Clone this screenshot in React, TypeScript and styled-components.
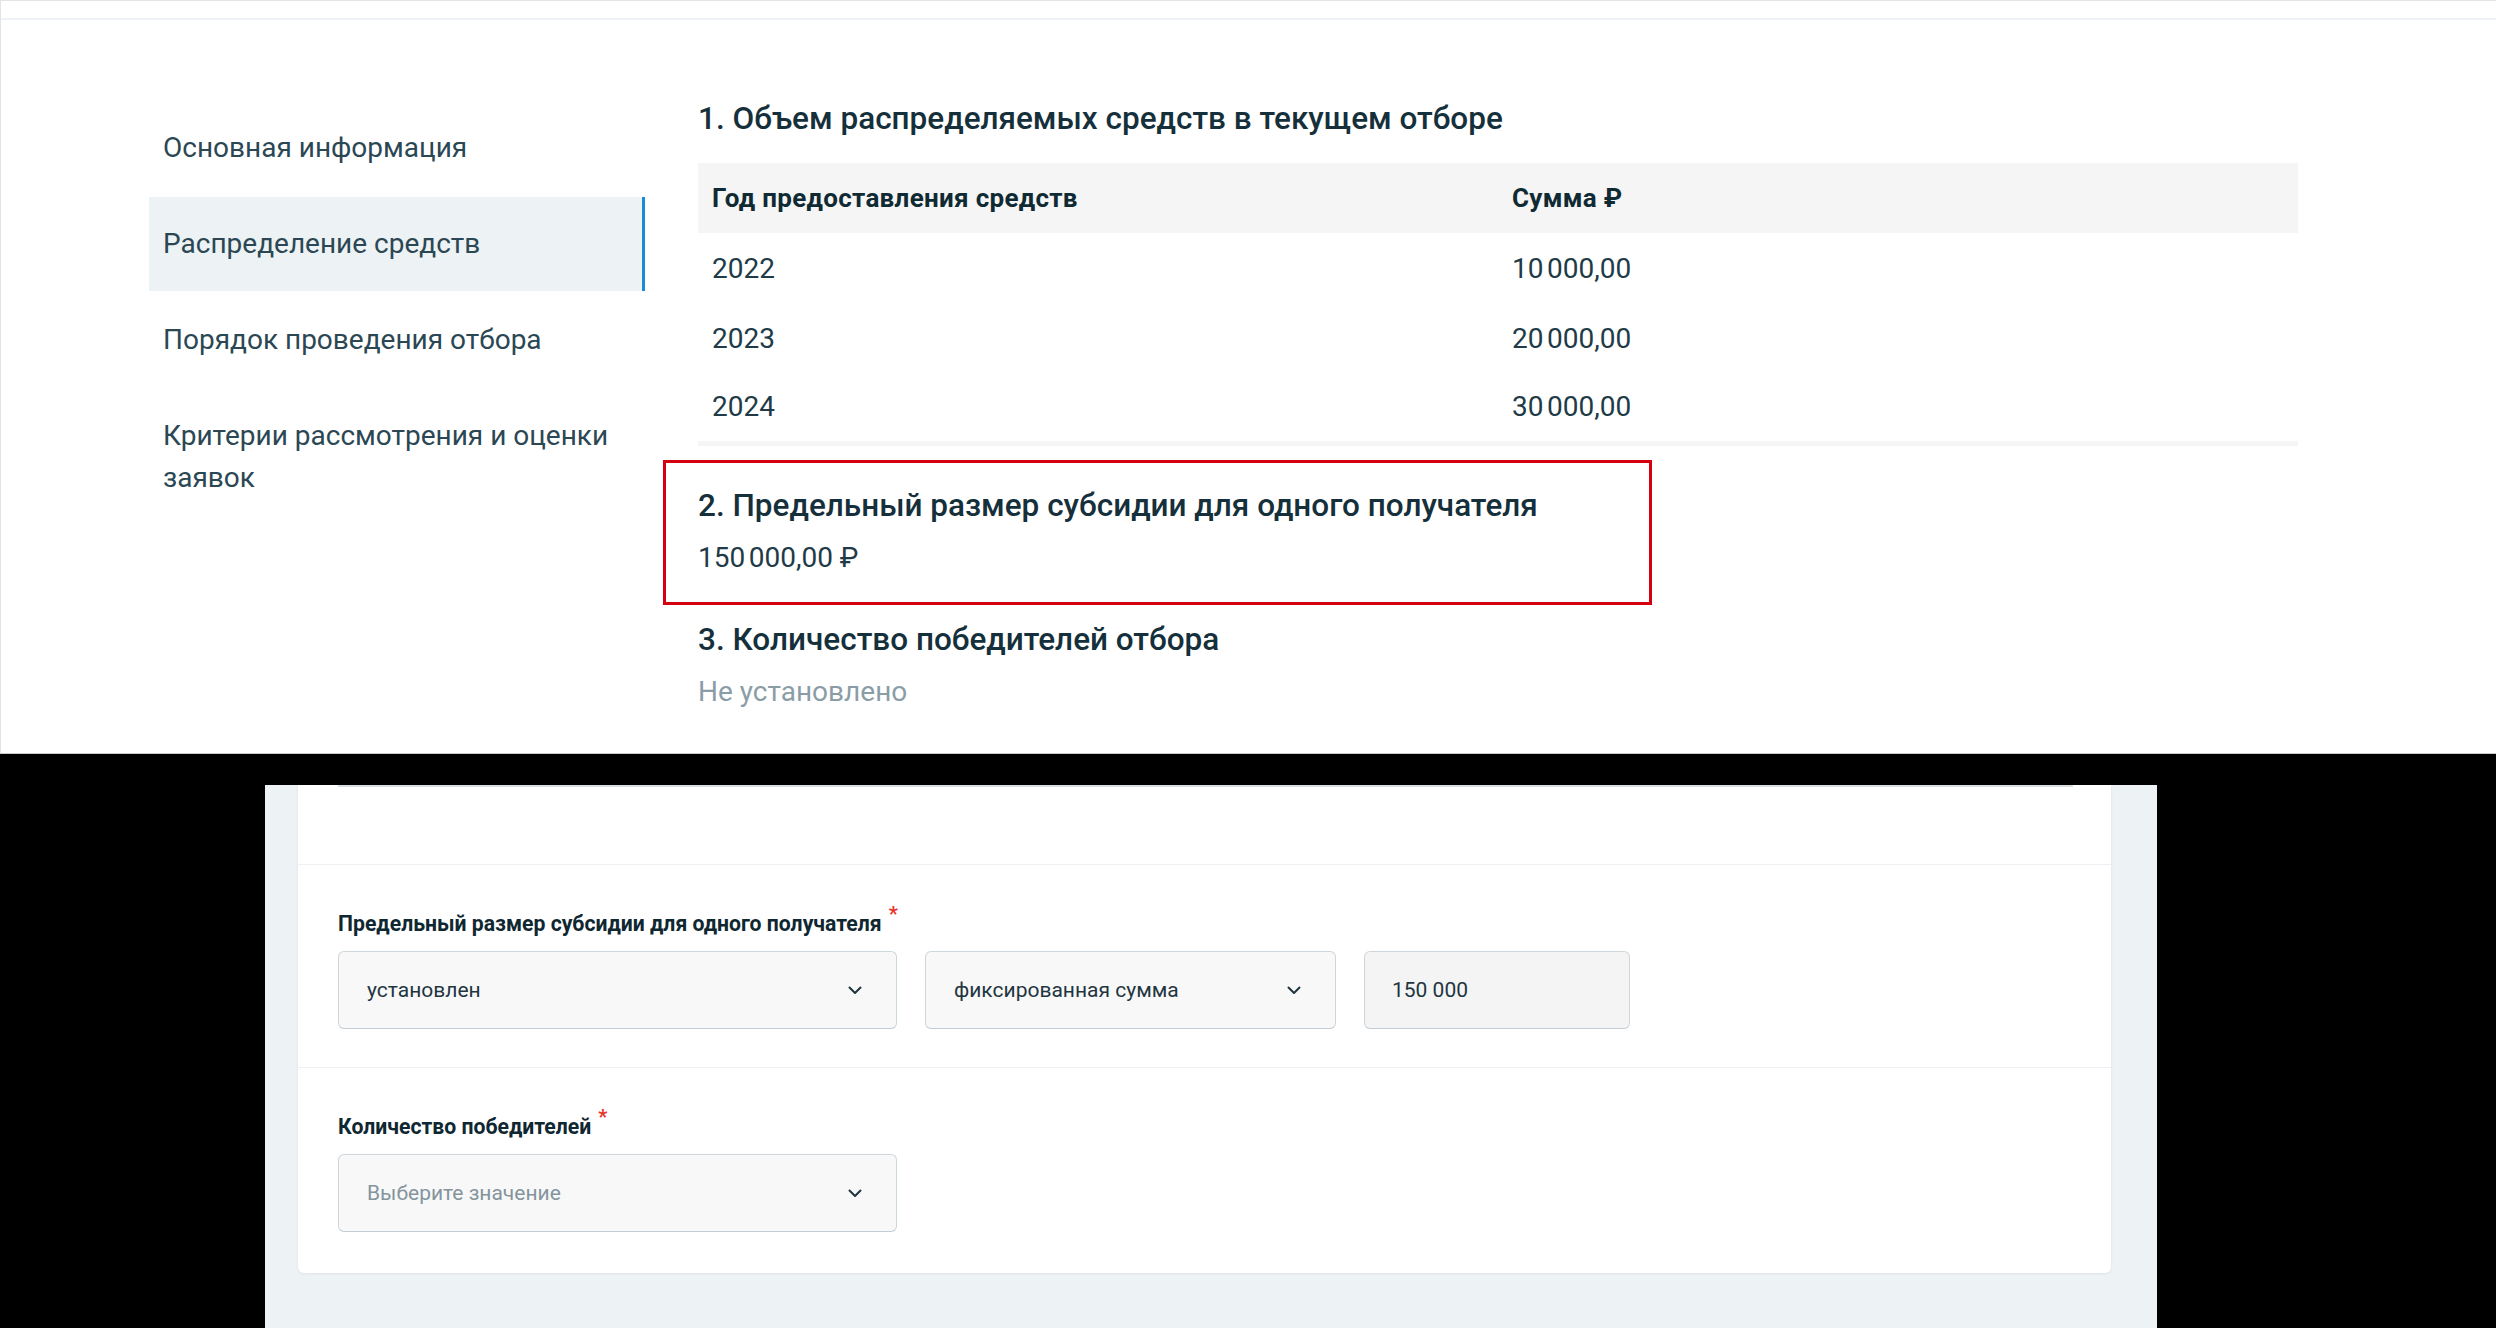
import React from "react";
import styled, { createGlobalStyle } from "styled-components";

const GlobalStyle = createGlobalStyle`
  html, body {
    margin: 0;
    padding: 0;
    background: #000000;
    font-family: Roboto, "Noto Sans", Arial, sans-serif;
  }
  * { box-sizing: border-box; }
`;

const Page = styled.div`
  width: 2496px;
  height: 1328px;
  overflow: hidden;
  background: #000;
  display: flex;
  flex-direction: column;
`;

/* ---------- top (view) panel ---------- */

const TopPanel = styled.section`
  height: 754px;
  background: #fff;
  border-top: 1px solid #e4e4e4;
  border-left: 1px solid #e4e4e4;
  border-bottom: 1px solid #c9c9c9;
  display: flex;
  flex-direction: column;
`;

const TopStrip = styled.div`
  height: 19px;
  border-bottom: 2px solid #eef2f6;
`;

const TopBody = styled.div`
  display: flex;
  gap: 53px;
  padding: 80px 0 0 148px;
`;

const Nav = styled.nav`
  width: 496px;
  margin-top: 1px;
  display: flex;
  flex-direction: column;
  gap: 2px;
`;

const NavItem = styled.div<{ $active?: boolean }>`
  padding: 26px 14px;
  font-size: 28px;
  line-height: 42px;
  color: #2b4753;
  background: ${(p) => (p.$active ? "#edf2f5" : "transparent")};
  border-right: 3px solid ${(p) => (p.$active ? "#1b8bd8" : "transparent")};
`;

const Content = styled.div`
  width: 1600px;
  display: flex;
  flex-direction: column;
`;

const SectionTitle = styled.h2`
  margin: 0 0 14px;
  font-size: 31.5px;
  line-height: 38px;
  font-weight: 500;
  color: #15303b;
`;

const TableTitle = styled(SectionTitle)`
  margin-bottom: 25px;
`;

const Table = styled.table`
  width: 100%;
  border-collapse: collapse;
  border-bottom: 5px solid #f5f5f5;
`;

const HeadCell = styled.th<{ $w?: number }>`
  height: 70px;
  padding: 0 14px;
  text-align: left;
  background: #f5f5f5;
  font-size: 26px;
  font-weight: 700;
  letter-spacing: 0.3px;
  color: #102a34;
  width: ${(p) => (p.$w ? `${p.$w}px` : "auto")};
`;

const Cell = styled.td`
  height: 70px;
  padding: 0 14px;
  font-size: 28px;
  color: #1f3b47;
`;

const Highlight = styled.div`
  margin: 14px 0 0 -35px;
  width: 989px;
  border: 3px solid #d5000f;
  padding: 24px 32px 25px;
`;

const Plain = styled.div`
  margin-top: 16px;
`;

const Value = styled.div<{ $muted?: boolean }>`
  font-size: 28px;
  line-height: 38px;
  color: ${(p) => (p.$muted ? "#8a9da7" : "#1f3b47")};
`;

/* ---------- bottom (form) panel ---------- */

const FormArea = styled.section`
  margin: 31px 0 0 265px;
  width: 1892px;
  flex: 1;
  background: #edf2f5;
  padding: 0 46px 55px 33px;
`;

const Card = styled.div`
  background: #fff;
  border-radius: 0 0 6px 6px;
  box-shadow: 0 1px 3px rgba(20, 50, 70, 0.08);
`;

const CardTop = styled.div`
  height: 80px;
  border-bottom: 1px solid #edf1f4;
  padding: 0 38px 0 40px;
`;

const CutLine = styled.div`
  border-top: 2px solid #d8dee2;
`;

const FieldRow = styled.div<{ $last?: boolean }>`
  padding: 46px 40px ${(p) => (p.$last ? "41px" : "38px")};
  border-bottom: ${(p) => (p.$last ? "none" : "1px solid #edf1f4")};
  display: flex;
  flex-direction: column;
  gap: 14px;
`;

const Label = styled.div`
  font-size: 21.2px;
  line-height: 26px;
  font-weight: 700;
  color: #0f2731;
`;

const Req = styled.span`
  color: #e8332a;
  font-size: 20px;
  font-weight: 700;
  margin-left: 7px;
  position: relative;
  top: -10px;
`;

const Controls = styled.div`
  display: flex;
  gap: 28px;
`;

const Select = styled.div<{ $w: number }>`
  width: ${(p) => p.$w}px;
  height: 78px;
  border: 1.5px solid #cdd6db;
  border-bottom-color: #c3cdd3;
  border-radius: 6px;
  background: #f8f8f8;
  display: flex;
  align-items: center;
  justify-content: space-between;
  padding: 0 34px 0 28px;
`;

const InputBox = styled(Select)`
  background: #f4f4f4;
  padding: 0 27px;
`;

const FieldText = styled.span<{ $placeholder?: boolean }>`
  font-size: 21px;
  color: ${(p) => (p.$placeholder ? "#84949d" : "#1f3540")};
`;

const Chevron = () => (
  <svg width="14" height="9" viewBox="0 0 14 9" fill="none">
    <path d="M1.5 1.5 L7 7 L12.5 1.5" stroke="#1f3540" strokeWidth="2" strokeLinecap="round" strokeLinejoin="round" />
  </svg>
);

const NNBSP = "\u202F";

const rows = [
  ["2022", `10${NNBSP}000,00`],
  ["2023", `20${NNBSP}000,00`],
  ["2024", `30${NNBSP}000,00`],
];

export default function App() {
  return (
    <>
      <GlobalStyle />
      <Page>
        <TopPanel>
          <TopStrip />
          <TopBody>
            <Nav>
              <NavItem>Основная информация</NavItem>
              <NavItem $active>Распределение средств</NavItem>
              <NavItem>Порядок проведения отбора</NavItem>
              <NavItem>Критерии рассмотрения и оценки заявок</NavItem>
            </Nav>
            <Content>
              <TableTitle>1. Объем распределяемых средств в текущем отборе</TableTitle>
              <Table>
                <thead>
                  <tr>
                    <HeadCell $w={800}>Год предоставления средств</HeadCell>
                    <HeadCell>Сумма ₽</HeadCell>
                  </tr>
                </thead>
                <tbody>
                  {rows.map(([y, s]) => (
                    <tr key={y}>
                      <Cell>{y}</Cell>
                      <Cell>{s}</Cell>
                    </tr>
                  ))}
                </tbody>
              </Table>
              <Highlight>
                <SectionTitle>2. Предельный размер субсидии для одного получателя</SectionTitle>
                <Value>{`150${NNBSP}000,00 ₽`}</Value>
              </Highlight>
              <Plain>
                <SectionTitle>3. Количество победителей отбора</SectionTitle>
                <Value $muted>Не установлено</Value>
              </Plain>
            </Content>
          </TopBody>
        </TopPanel>

        <FormArea>
          <Card>
            <CardTop>
              <CutLine />
            </CardTop>
            <FieldRow>
              <Label>
                Предельный размер субсидии для одного получателя<Req>*</Req>
              </Label>
              <Controls>
                <Select $w={559}>
                  <FieldText>установлен</FieldText>
                  <Chevron />
                </Select>
                <Select $w={411}>
                  <FieldText>фиксированная сумма</FieldText>
                  <Chevron />
                </Select>
                <InputBox $w={266}>
                  <FieldText>150 000</FieldText>
                </InputBox>
              </Controls>
            </FieldRow>
            <FieldRow $last>
              <Label>
                Количество победителей<Req>*</Req>
              </Label>
              <Controls>
                <Select $w={559}>
                  <FieldText $placeholder>Выберите значение</FieldText>
                  <Chevron />
                </Select>
              </Controls>
            </FieldRow>
          </Card>
        </FormArea>
      </Page>
    </>
  );
}
